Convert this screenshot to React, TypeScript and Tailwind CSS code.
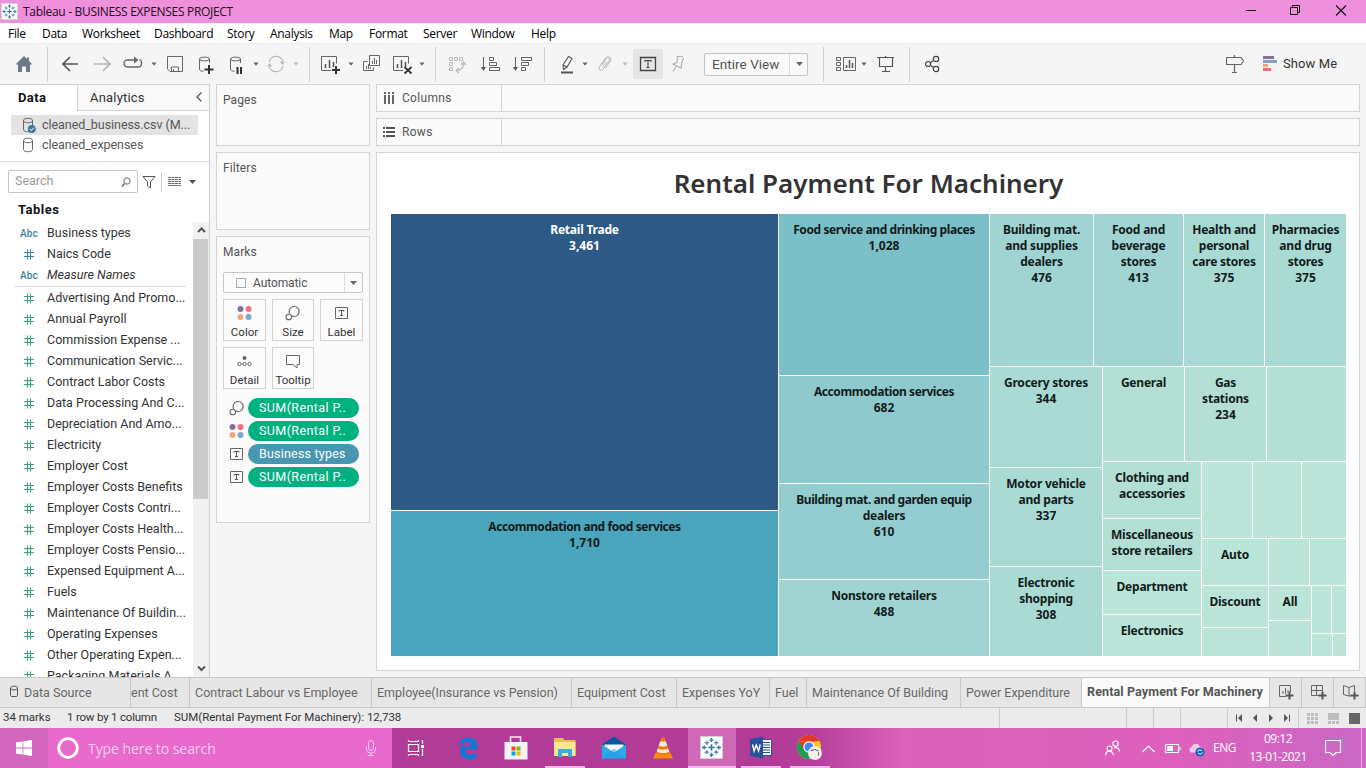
import React from "react";

type SvgProps = { w: number; h?: number; className?: string; children: React.ReactNode };

function Svg({ w, h = 24, className = "", children }: SvgProps) {
  return (
    <svg width={w} height={h} viewBox={`0 0 ${w} ${h}`} fill="none" className={`block shrink-0 ${className}`}>
      {children}
    </svg>
  );
}

function Caret({ className = "", fill = "#666" }: { className?: string; fill?: string }) {
  return (
    <Svg w={6} className={className}>
      <path d="M0.5 10.5h5l-2.5 3.2z" fill={fill} />
    </Svg>
  );
}

function Sep({ className = "" }: { className?: string }) {
  return <div className={`h-[35px] w-px shrink-0 bg-[#d0d0d0] ${className}`} />;
}

function TableauMark({ size, className = "" }: { size: number; className?: string }) {
  return (
    <svg width={size} height={size} viewBox="0 0 22 22" fill="none" className={`block shrink-0 ${className}`}>
      <rect x="0.5" y="0.5" width="21" height="21" fill="#fbfbfb" stroke="#cfcfd4" />
      <g stroke="#2f7ba6" strokeWidth="1.300">
        <path d="M11 8v6M8 11h6" strokeWidth="1.600" />
        <path d="M11 2v4M9 4h4M11 16v4M9 18h4M4 9v4M2 11h4M18 9v4M16 11h4" />
        <path d="M6.5 4.5v4M4.500 6.500h4M15.500 4.500v4M13.500 6.500h4M6.500 13.500v4M4.500 15.500h4M15.500 13.500v4M13.500 15.500h4" stroke="#5b93b3" />
      </g>
    </svg>
  );
}

function TitleBar() {
  return (
    <div className="flex h-[23px] shrink-0 items-center bg-[#ef90dc] font-['Open_Sans',sans-serif] text-[12px] text-[#1d0a19]">
      <TableauMark size={17} className="ml-[1px]" />
      <span className="ml-[5px] tracking-[-0.3px]">Tableau - BUSINESS EXPENSES PROJECT</span>
      <Svg w={120} h={23} className="ml-auto">
        <path d="M-1 10.500h11" stroke="#111" />
        <path d="M44.500 7.500h7v7h-7zM46.500 7.500v-2h7v7h-2" stroke="#111" />
        <path d="M90 5.500l10 10M100 5.500l-10 10" stroke="#111" strokeWidth="1.1" />
      </Svg>
    </div>
  );
}

const MENUS: [string, string][] = [
  ["File", "w-[34px]"],
  ["Data", "w-[40px]"],
  ["Worksheet", "w-[72px]"],
  ["Dashboard", "w-[73px]"],
  ["Story", "w-[43px]"],
  ["Analysis", "w-[59px]"],
  ["Map", "w-[40px]"],
  ["Format", "w-[54px]"],
  ["Server", "w-[48px]"],
  ["Window", "w-[60px]"],
  ["Help", "w-[40px]"],
];

function MenuBar() {
  return (
    <div className="flex h-[20px] shrink-0 items-center bg-white pt-[2px] pl-[8px] font-['Open_Sans',sans-serif] text-[12px] tracking-[-0.3px] text-black">
      {MENUS.map(([m, w]) => (
        <span key={m} className={w}>{m}</span>
      ))}
    </div>
  );
}

function Cylinder({ x = 0 }: { x?: number }) {
  return <path d={`M${x + 0.5} 7c0-2.500 10-2.500 10 0s-10 2.500-10 0v10c0 1.500 1.500 2.300 4 2.300M${x + 10.500} 7v4`} stroke="#666" />;
}

function ChartBox() {
  return (
    <>
      <path d="M10 18.500H0.500v-14h15v7" stroke="#666" />
      <path d="M4.500 12v4M8.500 8v8M12.500 10v5" stroke="#555" strokeWidth="1.500" />
    </>
  );
}

function Toolbar() {
  return (
    <div className="flex h-[41px] shrink-0 items-center border-t border-[#ececec] bg-[#f5f5f5]">
      <Svg w={18} className="ml-[15px]">
        <path d="M9 4L0.500 12.500h2.500V20h4v-5.500h4V20h4v-7.500h2.500L14 9V5.500h-2v1.500z" fill="#6b7886" />
      </Svg>
      <Sep className="ml-[14px]" />
      <Svg w={17} className="ml-[14px]">
        <path d="M16 12H1.500M8 5L1 12l7 7" stroke="#555" strokeWidth="1.600" />
      </Svg>
      <Svg w={17} className="ml-[15px]">
        <path d="M0 12h15M9 5l7 7-7 7" stroke="#b4b4b4" strokeWidth="1.600" />
      </Svg>
      <Svg w={20} className="ml-[12px]">
        <path d="M12 8H4.500a3.500 3.500 0 0 0 0 7H15c4.500 0 4.500-6 1.500-7.500" stroke="#666" strokeWidth="1.300" />
        <path d="M11 4.500l4.500 3.500-4.500 3.500z" fill="#666" />
      </Svg>
      <Caret className="ml-[8px]" />
      <Svg w={17} className="ml-[10px]">
        <path d="M0.500 4.500h15v15H3l-2.500-2.500zM4.500 19v-4h7v4M6.500 17v2" stroke="#666" />
      </Svg>
      <Svg w={16} className="ml-[14px]">
        <g transform="translate(1 0)"><Cylinder /></g>
        <path d="M11 13v9M6.500 17.500h9" stroke="#333" strokeWidth="2" />
      </Svg>
      <Svg w={15} className="ml-[15px]">
        <Cylinder x={1} />
        <path d="M8.500 15v7M12 15v7" stroke="#333" strokeWidth="2" />
      </Svg>
      <Caret className="ml-[9px]" />
      <Svg w={18} className="ml-[8px]">
        <path d="M2 10a7.200 7.200 0 0 1 13.800-1M16 14a7.200 7.200 0 0 1-13.800 1" stroke="#bbb" strokeWidth="1.200" />
        <path d="M12.500 9.500h5.500l-2.500 3.500zM5.500 14.500h-5.500l2.500-3.500z" fill="#bbb" />
      </Svg>
      <Caret className="ml-[8px]" fill="#bbb" />
      <Sep className="ml-[10px]" />
      <Svg w={20} className="ml-[11px]">
        <ChartBox />
        <path d="M15 14v8M11 18h8" stroke="#333" strokeWidth="2" />
      </Svg>
      <Caret className="ml-[7px]" />
      <Svg w={18} className="ml-[9px]">
        <path d="M6.500 3.500h10v10h-10zM4.500 9.500h-4v9h10v-3" stroke="#666" />
        <path d="M9.500 9v3M11.500 6v6M13.500 8v4M3.500 14v3M5.500 12v5M7.500 15v2" stroke="#666" />
      </Svg>
      <Svg w={20} className="ml-[12px]">
        <ChartBox />
        <path d="M11.500 15l7 6.500M18.500 15l-7 6.500" stroke="#333" strokeWidth="1.800" />
      </Svg>
      <Caret className="ml-[6px]" />
      <Sep className="ml-[10px]" />
      <Svg w={20} className="ml-[12px]">
        <path d="M1.500 5.500h3v3h-3zM6.500 5.500h3v3h-3zM11.500 5.500h3v3h-3zM1.500 10.500h3v3h-3zM1.500 15.500h3v3h-3z" stroke="#bbb" />
        <path d="M15.500 11.500c0 4-2 6.500-7 7M13 13l2.500-3 2.500 3M11 16l-3 2.500 3 2.500" stroke="#bbb" strokeWidth="1.300" />
      </Svg>
      <Svg w={20} className="ml-[13px]">
        <path d="M2.500 5v12M8.500 5.500h4v3h-4zM8.500 10.500h7v3h-7zM8.500 15.500h10v3h-10z" stroke="#666" />
        <path d="M0 15h5l-2.500 4z" fill="#555" />
      </Svg>
      <Svg w={20} className="ml-[12px]">
        <path d="M2.500 5v12M8.500 5.500h10v3h-10zM8.500 10.500h7v3h-7zM8.500 15.500h4v3h-4z" stroke="#666" />
        <path d="M0 15h5l-2.500 4z" fill="#555" />
      </Svg>
      <Sep className="ml-[11px]" />
      <Svg w={15} className="ml-[15px]">
        <path d="M3 13l5.500-8.500 3.500 2L7 15l-3.500 2.500zM3 13l4 2" stroke="#555" strokeWidth="1.100" />
        <path d="M1 20.500h12" stroke="#555" strokeWidth="2" />
      </Svg>
      <Caret className="ml-[7px]" />
      <Svg w={14} className="ml-[10px]">
        <path d="M3.500 13l4.800-6.500c1.500-2 4.500 0 3 2.200L5 17.500c-1.800 2.300-5.300-.2-3.700-2.600L7.500 6c2.200-3 7-.2 4.800 3.200L7.500 16M8.500 9.500l-4 5.500" stroke="#b4b4b4" />
      </Svg>
      <Caret className="ml-[10px]" fill="#bbb" />
      <div className="ml-[5px] flex h-[30px] w-[30px] shrink-0 items-center justify-center bg-[#e5e5e5]">
        <Svg w={18}>
          <path d="M1.500 5.500h15v13h-15z" stroke="#444" strokeWidth="1.300" />
          <path d="M6 10V8.500h6V10M9 8.500v7M7.500 15.500h3" stroke="#444" strokeWidth="1.100" />
        </Svg>
      </div>
      <Svg w={14} className="ml-[8px]">
        <path d="M5.500 4.500h6.500M6.500 5l-.5 5.500-4 1.500 8 4 .5-4 2-6.500M5.500 14l-3.500 5.500" stroke="#b4b4b4" strokeWidth="1.200" />
      </Svg>
      <div className="ml-[19px] flex h-[23px] w-[104px] shrink-0 items-center rounded-[2px] border border-[#c4c4c4] bg-[#f9f9f9]">
        <span className="w-[84px] pl-[7px] font-['Roboto',sans-serif] text-[13.500px] tracking-[0.050px] whitespace-nowrap text-[#555]">Entire View</span>
        <span className="flex h-full flex-1 items-center justify-center border-l border-[#dcdcdc]">
          <Svg w={8}><path d="M1 10h7l-3.500 4z" fill="#666" /></Svg>
        </span>
      </div>
      <Sep className="ml-[15px]" />
      <Svg w={21} className="ml-[12px]">
        <path d="M0.500 5.500h4v3h-4zM0.500 10.500h4v3h-4zM0.500 15.500h4v3h-4zM7.500 5.500h12v13h-12z" stroke="#666" />
        <path d="M10.500 13v3M13.500 8v8M16.500 11v5" stroke="#555" strokeWidth="1.500" />
      </Svg>
      <Caret className="ml-[4px]" />
      <Svg w={18} className="ml-[10px]">
        <path d="M0 5.500h17M2.500 6v8.500h13V6M8.500 4v1M8.500 15v5M5 19.500h8" stroke="#555" strokeWidth="1.200" />
      </Svg>
      <Sep className="ml-[14px]" />
      <Svg w={16} className="ml-[15px]">
        <g stroke="#444" strokeWidth="1.200">
          <circle cx="3" cy="12" r="2.500" /><circle cx="11" cy="7" r="2.700" /><circle cx="11" cy="17" r="2.700" />
          <path d="M5.300 10.700l3.400-2.200M5.300 13.300l3.400 2.200" />
        </g>
      </Svg>
      <Svg w={19} className="ml-auto">
        <path d="M0.500 5.500h14.500l2.500 3.500-2.500 3.500H0.500zM8.500 3v2M8.500 13v7.500M6 20.500h5" stroke="#666" strokeWidth="1.200" />
      </Svg>
      <Svg w={15} className="ml-[18px]">
        <path d="M0 4h11v3H0z" fill="#86709a" /><path d="M0 8h14v3H0z" fill="#7ea3cb" />
        <path d="M0 12h5v3H0z" fill="#f3a77c" /><path d="M0 16h8v3H0z" fill="#f2677c" />
      </Svg>
      <span className="mr-[28px] ml-[5px] w-[55px] whitespace-nowrap font-['Roboto',sans-serif] text-[13px] tracking-[0.1px] text-[#333]">Show Me</span>
    </div>
  );
}

function DbIcon({ checked = false }: { checked?: boolean }) {
  return (
    <Svg w={16} h={18}>
      <path d="M1.500 4.500c0-3 9-3 9 0s-9 3-9 0v9c0 3 9 3 9 0v-9" stroke="#666" />
      {checked && (
        <>
          <circle cx="9.800" cy="13" r="4" fill="#3a7e9f" />
          <path d="M8 13l1.400 1.500 2.500-2.800" stroke="#fff" />
        </>
      )}
    </Svg>
  );
}

const MEASURES = [
  "Advertising And Promo...",
  "Annual Payroll",
  "Commission Expense ...",
  "Communication Servic...",
  "Contract Labor Costs",
  "Data Processing And C...",
  "Depreciation And Amo...",
  "Electricity",
  "Employer Cost",
  "Employer Costs Benefits",
  "Employer Costs Contri...",
  "Employer Costs Health...",
  "Employer Costs Pensio...",
  "Expensed Equipment A...",
  "Fuels",
  "Maintenance Of Buildin...",
  "Operating Expenses",
  "Other Operating Expen...",
  "Packaging Materials A...",
];

function Hash({ color }: { color: string }) {
  return (
    <Svg w={11} h={11}>
      <path d="M3.500 0.500v10M6.500 0.500v10M0 3.500h10M0 7.500h10" stroke={color} strokeWidth="1.100" />
    </Svg>
  );
}

function Field({ kind, label, italic = false }: { kind: "abc" | "dim" | "measure"; label: string; italic?: boolean }) {
  return (
    <div className="flex h-[21px] shrink-0 items-center whitespace-nowrap">
      <span className="flex w-[47px] shrink-0 justify-center pl-[11px]">
        {kind === "abc" ? (
          <span className="text-[10px] font-medium tracking-[0.1px] text-[#3f7f9c]">Abc</span>
        ) : (
          <Hash color={kind === "dim" ? "#3f7f9c" : "#3ba27e"} />
        )}
      </span>
      <span className={italic ? "italic" : ""}>{label}</span>
    </div>
  );
}

function DataPane() {
  return (
    <div className="flex w-[210px] shrink-0 flex-col border-t border-r border-[#d0d0d0] bg-white text-[13px] text-[#333]">
      <div className="flex h-[26px] shrink-0">
        <div className="w-[77px] pt-[3px] pl-[18px] font-bold tracking-[0.4px] text-[#111]">Data</div>
        <div className="flex flex-1 border-b border-l border-[#d4d4d4] bg-[#f9f9f9] pt-[3px] pl-[12px] tracking-[0.2px]">
          Analytics
          <Svg w={8} h={18} className="mr-[6px] ml-auto"><path d="M6.500 4.500L2 9l4.500 4.500" stroke="#555" strokeWidth="1.200" /></Svg>
        </div>
      </div>
      <div className="h-[51px] shrink-0 border-b border-[#dcdcdc] pt-[4px] text-[12.500px] tracking-[-0.050px] text-[#555]">
        <div className="ml-[11px] flex h-[20px] w-[187px] items-center bg-[#e3e3e3] pl-[11px] whitespace-nowrap">
          <DbIcon checked /><span className="ml-[4px]">cleaned_business.csv (M...</span>
        </div>
        <div className="ml-[11px] flex h-[20px] items-center pl-[11px]">
          <DbIcon /><span className="ml-[4px]">cleaned_expenses</span>
        </div>
      </div>
      <div className="mt-[8px] ml-[8px] flex h-[23px] shrink-0 items-center">
        <div className="flex h-[23px] w-[130px] items-center rounded-[2px] border border-[#c4c4c4] pl-[6px] text-[12.500px] text-[#999]">
          <span>Search</span>
          <Svg w={12} h={14} className="mr-[5px] ml-auto"><circle cx="7" cy="6" r="3.200" stroke="#666" /><path d="M4.500 8.500L2 11.500" stroke="#666" strokeWidth="1.300" /></Svg>
        </div>
        <Svg w={14} h={14} className="ml-[4px]"><path d="M1 1.500h12l-4.500 5.500v6l-3-2V7z" stroke="#555" /></Svg>
        <div className="ml-[5px] h-[18px] w-px bg-[#ccc]" />
        <Svg w={13} h={12} className="ml-[6px]">
          <path d="M0 1.500h13M0 3.500h13M0 5.500h13M0 7.500h13M0 9.500h13" stroke="#666" strokeDasharray="3 0.500" />
        </Svg>
        <Svg w={8} h={12} className="ml-[7px]"><path d="M1 4h7L4.500 8z" fill="#555" /></Svg>
      </div>
      <div className="mt-[7px] shrink-0 pl-[18px] text-[13px] leading-[20px] font-bold tracking-[0.500px] text-[#111]">Tables</div>
      <div className="mt-[2px] flex min-h-0 flex-1">
        <div className="flex min-w-0 flex-1 flex-col overflow-hidden pt-px text-[12.500px]">
          <Field kind="abc" label="Business types" />
          <Field kind="dim" label="Naics Code" />
          <Field kind="abc" label="Measure Names" italic />
          <div className="mr-[7px] mb-px ml-[15px] h-px shrink-0 bg-[#d9d9d9]" />
          {MEASURES.map((m) => (
            <Field key={m} kind="measure" label={m} />
          ))}
        </div>
        <div className="flex w-[16px] shrink-0 flex-col items-center bg-[#f1f1f1]">
          <Svg w={15} h={17}><path d="M4 10l3.500-3.500L11 10" stroke="#555" strokeWidth="2" /></Svg>
          <div className="mr-px h-[260px] w-[15px] bg-[#cbcbcb]" />
          <Svg w={15} h={17} className="mt-auto"><path d="M4 6.500L7.500 10 11 6.500" stroke="#555" strokeWidth="2" /></Svg>
        </div>
      </div>
    </div>
  );
}

function ColorDots() {
  return (
    <Svg w={16} h={16}>
      <circle cx="3.500" cy="4" r="3" fill="#86709a" /><circle cx="11.500" cy="4" r="3" fill="#f5707f" />
      <circle cx="3.500" cy="12" r="3" fill="#f2a57d" /><circle cx="11.500" cy="12" r="3" fill="#80a4cc" />
    </Svg>
  );
}
function SizeIcon() {
  return (
    <Svg w={16} h={16}>
      <path d="M4.700 8.800A5 5 0 1 1 7 11" stroke="#666" strokeWidth="1.100" /><circle cx="3.800" cy="12" r="2.800" stroke="#666" strokeWidth="1.100" />
    </Svg>
  );
}
function LabelIcon() {
  return (
    <Svg w={16} h={16}>
      <path d="M1.500 2.500h12v11h-12z" stroke="#666" />
      <path d="M5 6.500v-1h5v1M7.500 5.500v5M6 10.500h3" stroke="#555" />
    </Svg>
  );
}
function DetailIcon() {
  return (
    <Svg w={16} h={16}>
      <circle cx="7.500" cy="5" r="2" fill="#666" />
      <circle cx="2.500" cy="11" r="1.700" stroke="#666" /><circle cx="7.500" cy="11" r="1.700" stroke="#666" /><circle cx="12.500" cy="11" r="1.700" stroke="#666" />
    </Svg>
  );
}
function TooltipIcon() {
  return (
    <Svg w={16} h={16}>
      <path d="M1.500 2.500h13v9H12V15l-4-3.500H1.500z" stroke="#666" />
    </Svg>
  );
}

function MarkButton({ icon, label }: { icon: React.ReactNode; label: string }) {
  return (
    <div className="flex h-[42px] w-full flex-col items-center border border-[#d2d2d2] bg-[#fbfbfb] pt-[5px] text-[11.500px] text-[#333]">
      {icon}
      <span className="mt-[3px] leading-[17px]">{label}</span>
    </div>
  );
}

function Pill({ icon, label, blue = false }: { icon: React.ReactNode; label: string; blue?: boolean }) {
  return (
    <div className="flex h-[20px] items-center">
      <span className="w-[19px]">{icon}</span>
      <span className={`flex h-[20px] w-[111px] items-center rounded-full pl-[11px] text-[12.500px] whitespace-nowrap text-white ${blue ? "bg-[#4996b2] tracking-[0.2px]" : "bg-[#00b180] tracking-[0.4px]"}`}>
        {label}
      </span>
    </div>
  );
}

function Cards() {
  return (
    <div className="ml-[6px] flex w-[154px] shrink-0 flex-col gap-[6px] text-[12px] tracking-[0.1px] text-[#555]">
      <div className="h-[62px] border border-[#d4d4d4] bg-[#fafafa] pt-[6px] pl-[6px]">Pages</div>
      <div className="h-[78px] border border-[#d4d4d4] bg-[#fafafa] pt-[6px] pl-[6px]">Filters</div>
      <div className="h-[287px] border border-[#d4d4d4] bg-[#fafafa] px-[6px] pt-[5px]">
        <div className="h-[30px] pt-px">Marks</div>
        <div className="flex h-[21px] w-[140px] items-center rounded-[2px] border border-[#c8c8c8] bg-[#fbfbfb]">
          <span className="ml-[12px] h-[10px] w-[10px] border border-[#aaa]" />
          <span className="ml-[7px] pt-px tracking-[-0.1px]">Automatic</span>
          <span className="ml-auto flex h-full w-[18px] items-center justify-center border-l border-[#ddd]">
            <Svg w={7} h={8}><path d="M0 2h7L3.500 6z" fill="#666" /></Svg>
          </span>
        </div>
        <div className="mt-[6px] grid w-[140px] grid-cols-[43px_42px_43px] gap-[6px] tracking-normal">
          <MarkButton icon={<ColorDots />} label="Color" />
          <MarkButton icon={<SizeIcon />} label="Size" />
          <MarkButton icon={<LabelIcon />} label="Label" />
          <MarkButton icon={<DetailIcon />} label="Detail" />
          <MarkButton icon={<TooltipIcon />} label="Tooltip" />
        </div>
        <div className="mt-[9px] flex flex-col gap-[3px] pl-[6px]">
          <Pill icon={<SizeIcon />} label="SUM(Rental P.." />
          <Pill icon={<ColorDots />} label="SUM(Rental P.." />
          <Pill icon={<LabelIcon />} label="Business types" blue />
          <Pill icon={<LabelIcon />} label="SUM(Rental P.." />
        </div>
      </div>
    </div>
  );
}

function Tile({ className, lines = [] }: { className: string; lines?: string[] }) {
  return (
    <div className={`overflow-hidden pt-[8px] text-center text-[12px] leading-[16px] font-bold whitespace-nowrap text-[#111c1b] ${className}`}>
      {lines.map((l) => (
        <div key={l} className={/^\d/.test(l) ? "tracking-normal" : l.length > 20 ? "tracking-[-0.42px]" : "tracking-[-0.22px]"}>{l}</div>
      ))}
    </div>
  );
}

function Treemap() {
  return (
    <div className="flex h-[442px] w-[955px] gap-px bg-white font-['Noto_Sans',sans-serif]">
      <div className="flex w-[387px] flex-col gap-px">
        <Tile className="h-[296px] bg-[#2c5985] text-[#fff]!" lines={["Retail Trade", "3,461"]} />
        <Tile className="flex-1 bg-[#4ba5bc]" lines={["Accommodation and food services", "1,710"]} />
      </div>
      <div className="flex w-[210px] flex-col gap-px">
        <Tile className="h-[161px] bg-[#7bbfc9]" lines={["Food service and drinking places", "1,028"]} />
        <Tile className="h-[107px] bg-[#8ec9cd]" lines={["Accommodation services", "682"]} />
        <Tile className="h-[95px] bg-[#94cdcf]" lines={["Building mat. and garden equip", "dealers", "610"]} />
        <Tile className="flex-1 bg-[#a0d4d3]" lines={["Nonstore retailers", "488"]} />
      </div>
      <div className="flex flex-1 flex-col gap-px">
        <div className="flex h-[152px] gap-px">
          <Tile className="w-[103px] bg-[#a0d4d3]" lines={["Building mat.", "and supplies", "dealers", "476"]} />
          <Tile className="w-[89px] bg-[#a1d4d3]" lines={["Food and", "beverage", "stores", "413"]} />
          <Tile className="w-[80px] bg-[#a9dad4]" lines={["Health and", "personal", "care stores", "375"]} />
          <Tile className="flex-1 bg-[#a9dad4]" lines={["Pharmacies", "and drug", "stores", "375"]} />
        </div>
        <div className="flex flex-1 gap-px">
          <div className="flex w-[112px] flex-col gap-px">
            <Tile className="h-[100px] bg-[#a9dad4]" lines={["Grocery stores", "344"]} />
            <Tile className="h-[98px] bg-[#a9dad4]" lines={["Motor vehicle", "and parts", "337"]} />
            <Tile className="flex-1 bg-[#a9dad4]" lines={["Electronic", "shopping", "308"]} />
          </div>
          <div className="flex flex-1 flex-col gap-px">
            <div className="flex h-[94px] gap-px">
              <Tile className="w-[81px] bg-[#b3dfd5]" lines={["General"]} />
              <Tile className="w-[81px] bg-[#b3dfd5]" lines={["Gas", "stations", "234"]} />
              <Tile className="flex-1 bg-[#b3dfd5]" />
            </div>
            <div className="flex flex-1 gap-px">
              <div className="flex w-[98px] flex-col gap-px">
                <Tile className="h-[56px] bg-[#b3dfd5]" lines={["Clothing and", "accessories"]} />
                <Tile className="h-[51px] bg-[#b3dfd5]" lines={["Miscellaneous", "store retailers"]} />
                <Tile className="h-[43px] bg-[#bce5d9]" lines={["Department"]} />
                <Tile className="flex-1 bg-[#bce5d9]" lines={["Electronics"]} />
              </div>
              <div className="flex flex-1 flex-col gap-px">
                <div className="flex h-[76px] gap-px">
                  <Tile className="w-[50px] bg-[#bce5d9]" />
                  <Tile className="w-[48px] bg-[#bce5d9]" />
                  <Tile className="flex-1 bg-[#bce5d9]" />
                </div>
                <div className="flex flex-1 gap-px">
                  <div className="flex w-[66px] flex-col gap-px">
                    <Tile className="h-[46px] bg-[#bce5d9]" lines={["Auto"]} />
                    <Tile className="h-[41px] bg-[#bce5d9]" lines={["Discount"]} />
                    <Tile className="flex-1 bg-[#bce5d9]" />
                  </div>
                  <div className="flex flex-1 flex-col gap-px">
                    <div className="flex h-[46px] gap-px">
                      <Tile className="w-[40px] bg-[#bce5d9]" />
                      <Tile className="flex-1 bg-[#bce5d9]" />
                    </div>
                    <div className="flex flex-1 gap-px">
                      <div className="flex w-[42px] flex-col gap-px">
                        <Tile className="h-[34px] bg-[#bce5d9]" lines={["All"]} />
                        <Tile className="flex-1 bg-[#bce5d9]" />
                      </div>
                      <div className="flex flex-1 flex-col gap-px">
                        <div className="flex h-[47px] gap-px">
                          <Tile className="w-[19px] bg-[#bce5d9]" />
                          <Tile className="flex-1 bg-[#bce5d9]" />
                        </div>
                        <div className="flex flex-1 gap-px">
                          <Tile className="w-[20px] bg-[#bce5d9]" />
                          <Tile className="flex-1 bg-[#bce5d9]" />
                        </div>
                      </div>
                    </div>
                  </div>
                </div>
              </div>
            </div>
          </div>
        </div>
      </div>
    </div>
  );
}

function Shelf({ icon, label }: { icon: React.ReactNode; label: string }) {
  return (
    <div className="flex h-[28px] shrink-0 border border-[#d4d4d4] bg-[#fafafa] text-[12px] tracking-[0.3px] text-[#555]">
      <div className="flex w-[125px] items-center border-r border-[#d4d4d4] pl-[6px]">
        {icon}
        <span className="ml-[6px]">{label}</span>
      </div>
    </div>
  );
}

function View() {
  return (
    <div className="mr-[6px] ml-[6px] flex min-w-0 flex-1 flex-col gap-[6px]">
      <Shelf
        label="Columns"
        icon={<Svg w={13} h={12}><path d="M2 0v2M6 0v2M10 0v2M2 3v9M6 3v9M10 3v9" stroke="#666" strokeWidth="2" /></Svg>}
      />
      <Shelf
        label="Rows"
        icon={<Svg w={13} h={12}><path d="M0 2h2M0 6h2M0 10h2M3 2h9M3 6h9M3 10h9" stroke="#555" strokeWidth="2" /></Svg>}
      />
      <div className="flex h-[519px] shrink-0 flex-col border border-[#d4d4d4] bg-white pl-[14px]">
        <div className="flex h-[61px] w-[955px] items-center justify-center font-['Noto_Sans',sans-serif] text-[26px] font-semibold text-[#333]">
          <span>Rental Payment For Machinery</span>
        </div>
        <Treemap />
      </div>
    </div>
  );
}

const SHEETS: [string, string][] = [
  ["Contract Labour vs Employee", "w-[182px]"],
  ["Employee(Insurance vs Pension)", "w-[200px]"],
  ["Equipment Cost", "w-[105px]"],
  ["Expenses YoY", "w-[93px]"],
  ["Fuel", "w-[37px]"],
  ["Maintenance Of Building", "w-[154px]"],
  ["Power Expenditure", "w-[121px]"],
];

function SheetTabs() {
  const cell = "flex h-full shrink-0 items-center border-r border-[#c8c8c8]";
  return (
    <div className="flex h-[31px] shrink-0 items-center border-t border-b border-[#c8c8c8] bg-[#e6e6e6] text-[12.500px] whitespace-nowrap text-[#666]">
      <div className={`${cell} w-[131px] pl-[9px]`}>
        <Svg w={10} h={14} className="mb-[3px]"><path d="M1.500 4c0-2.500 7-2.500 7 0s-7 2.500-7 0v7c0 1 .5 1.500 1.500 1.500h4c1 0 1.500-.5 1.500-1.500V4" stroke="#555" /></Svg>
        <span className="ml-[5px] pt-px">Data Source</span>
      </div>
      <div className={`${cell} w-[59px] pt-px`}>ent Cost</div>
      {SHEETS.map(([s, w]) => (
        <div key={s} className={`${cell} pt-px pl-[5px] ${w}`}>{s}</div>
      ))}
      <div className={`${cell} w-[188px] bg-[#fafafa] pb-[1px] pl-[5px] font-bold tracking-[0.120px] text-[#555]`}>
        Rental Payment For Machinery
      </div>
      <div className={`${cell} w-[32px] pl-[8px]`}>
        <Svg w={17} h={17}><path d="M8 12.500H1.500v-11h11V8M5 7v3M7.500 4v6M10 6v3" stroke="#666" /><path d="M11.500 7.500v8M7.500 11.500h8" stroke="#555" strokeWidth="2" /></Svg>
      </div>
      <div className={`${cell} w-[32px] pl-[8px]`}>
        <Svg w={17} h={17}><path d="M9 11.500H1.500v-10h11V7M6.500 1.500v10M1.500 6.500h11" stroke="#666" /><path d="M12.500 7.500v8M8.500 11.500h8" stroke="#555" strokeWidth="2" /></Svg>
      </div>
      <div className={`${cell} w-[32px] pl-[8px]`}>
        <Svg w={17} h={17}><path d="M1.500 1.500l5.500 2v8.500l-5.500-1.500zM7 3.500l5.500-2V7M7 12h2" stroke="#666" /><path d="M12.500 7.500v8M8.500 11.500h8" stroke="#555" strokeWidth="2" /></Svg>
      </div>
    </div>
  );
}

function StatusBar() {
  const cell = "h-full shrink-0 border-l border-[#ccc]";
  return (
    <div className="flex h-[20px] shrink-0 items-center bg-[#ebebeb] text-[11.500px] tracking-[-0.030px] whitespace-nowrap text-[#333]">
      <span className="w-[64px] pl-[3px]">34 marks</span>
      <span className="w-[107px] pl-[3px] tracking-[-0.2px]">1 row by 1 column</span>
      <span className="pl-[3px]">SUM(Rental Payment For Machinery): 12,738</span>
      <div className={`${cell} ml-auto w-[127px]`} />
      <div className={`${cell} w-[27px]`} />
      <div className={`${cell} w-[27px]`} />
      <div className={`${cell} w-[47px]`} />
      <div className={`${cell} flex w-[71px] items-center`}>
        <Svg w={66} h={12} className="mb-px ml-[7px]">
          <path d="M1.500 2.500v7M54.500 2.500v7" stroke="#555" />
          <path d="M7 2v8L3 6zM22 2v8L18 6zM34 2v8L38 6zM49 2v8L53 6z" fill="#555" />
        </Svg>
      </div>
      <div className={`${cell} flex w-[68px] items-center`}>
        <Svg w={60} h={13} className="ml-[8px]">
          <path d="M0 2.500h11M0 6.500h11M0 10.500h11" stroke="#bdbdbd" strokeWidth="3" strokeDasharray="3 1" />
          <path d="M21 1h11v7H21z" fill="#bdbdbd" /><path d="M21 10.500h11" stroke="#bdbdbd" strokeWidth="3" strokeDasharray="3 1" />
          <path d="M42 1h11v11H42z" fill="#666" />
        </Svg>
      </div>
    </div>
  );
}

function TaskCell({ className = "", children }: { className?: string; children: React.ReactNode }) {
  return <div className={`flex h-full shrink-0 items-center justify-center ${className}`}>{children}</div>;
}

function Taskbar() {
  return (
    <div className="flex h-[40px] shrink-0 bg-[linear-gradient(90deg,#b13b97_0,#b13b97_57%,#b8409e_60%,#da62bb_66%,#dd60bc_86%,#cb68c5_100%)] font-['Open_Sans',sans-serif] text-white">
      <TaskCell className="w-[48px] bg-[#d566bd]">
        <Svg w={16} h={16}>
          <path d="M0 2.300l6.500-.9v6.200H0zM7.300 1.300L16 0v7.600H7.300zM0 8.400h6.500v6.200L0 13.700zM7.300 8.400H16V16l-8.700-1.300z" fill="#fff" />
        </Svg>
      </TaskCell>
      <div className="flex w-[344px] shrink-0 items-center bg-[#e86acd]">
        <Svg w={22} h={22} className="ml-[9px]"><circle cx="11" cy="11" r="9.300" stroke="#fff" strokeWidth="2.800" /></Svg>
        <span className="ml-[9px] pt-px text-[14px] tracking-[-0.060px] text-[#f9cdef]">Type here to search</span>
        <Svg w={12} h={18} className="mr-[15px] ml-auto"><rect x="3.500" y="1.500" width="5" height="10" rx="2.500" stroke="#f9cdef" /><path d="M1.500 8v3c0 4 9 4 9 0V8M6 14v3M3 16.500h6" stroke="#f9cdef" /></Svg>
      </div>
      <TaskCell className="w-[48px]">
        <Svg w={18} h={16}><path d="M1.500 4.500h10v7h-10zM1.500 0v1.500h10V0M1.500 16v-1.500h10V16M15.500 0v4M15.500 9v7" stroke="#fff" strokeWidth="1.200" /><path d="M14 5h3v3h-3z" fill="#fff" /></Svg>
      </TaskCell>
      <TaskCell className="w-[55px]">
        <Svg w={22} h={22}><path d="M1 10C2 3.500 6.500 0.500 11.500 0.500c6 0 9 4.500 9 9v3H7.500c.3 3.500 3 5 6 5 2.500 0 4.500-.6 6-1.500v4.500c-2 1-4.300 1.500-7 1.500-6 0-9.500-3.500-9.500-8 0-3.500 2-6 5-7.500-1 1-1.300 2-1.500 3H14c0-2.500-1.500-4.500-4.500-4.500C5.500 5 2.500 7.500 1 10z" fill="#0d78d6" /></Svg>
      </TaskCell>
      <TaskCell className="w-[41px]">
        <Svg w={24} h={26}><path d="M6.500 7V2h10v5" stroke="#f3f0f2" strokeWidth="1.500" /><path d="M0.500 7h23v17.500h-23z" fill="#f4f2f4" /><path d="M7.500 11.500h4v4h-4z" fill="#ef4a23" /><path d="M12.500 11.500h4v4h-4z" fill="#7fb900" /><path d="M7.500 16.500h4v4h-4z" fill="#00a3ee" /><path d="M12.500 16.500h4v4h-4z" fill="#feb800" /></Svg>
      </TaskCell>
      <TaskCell className="ml-[9px] w-[40px] border-b-2 border-[#f7b8e8]">
        <Svg w={22} h={22} className="mt-[2px]"><path d="M0 1h9l1.500 2H21.500v16H0z" fill="#e9bd4f" /><path d="M0 5h21.500v14H0z" fill="#fde592" /><path d="M4 12h14v8h-4v-4H8v4H4z" fill="#3aaee0" /></Svg>
      </TaskCell>
      <TaskCell className="ml-[16px] w-[26px]">
        <Svg w={24} h={24}><path d="M0 8.500L12 0.500l12 8V12H0z" fill="#0b57a0" /><path d="M2.500 8.500h19V17h-19z" fill="#f7f7f7" /><path d="M0 8.500l12 8 12-8V22.500H0z" fill="#2aabee" /><path d="M0 22.500l12-10 12 10z" fill="#2497dd" opacity=".5" /></Svg>
      </TaskCell>
      <TaskCell className="ml-[24px] w-[24px]">
        <Svg w={22} h={24}><path d="M4 16h14l3 6.500H1z" fill="#f58b0d" /><path d="M9.500 1.500h3L18 17c-2 2.500-12 2.500-14 0z" fill="#f47d0a" /><path d="M8.200 5.500h5.600l1.400 4c-2 1.300-6.400 1.300-8.400 0zM5.800 12.500c3 1.600 7.400 1.600 10.400 0l1 3c-3 2-9.400 2-12.400 0z" fill="#ececec" /></Svg>
      </TaskCell>
      <TaskCell className="ml-[13px] w-[48px] border-b-2 border-[#f7b8e8] bg-[#d068b8]">
        <TableauMark size={23} className="mt-[1px] mr-px" />
      </TaskCell>
      <TaskCell className="ml-[5px] w-[40px] border-b-2 border-[#f7b8e8]">
        <Svg w={24} h={24} className="mt-[2px]"><path d="M12 3.500h10.500v16H12z" fill="#f4f6fa" stroke="#2b579a" /><path d="M14 6.500h7M14 9h7M14 11.500h7M14 14h7M14 16.500h7" stroke="#2b579a" /><path d="M1 3l13-2.500v22L1 20z" fill="#27529a" /><path d="M3.500 8.500l1.600 6.500L7.300 9l2.200 6 1.700-6.500" stroke="#fff" strokeWidth="1.400" /></Svg>
      </TaskCell>
      <TaskCell className="ml-[9px] w-[40px] border-b-2 border-[#f7b8e8]">
        <Svg w={28} h={26} className="mt-[2px]">
          <circle cx="13" cy="12" r="12" fill="#f7c61a" /><path d="M2.600 6A12 12 0 0 1 23.400 6L13 7z" fill="#e2392b" /><path d="M2.600 6A12 12 0 0 0 13 24l5-9-9-1z" fill="#1d9d52" />
          <path d="M2.600 6l5.400 8 3-7z" fill="#e2392b" />
          <circle cx="13" cy="12" r="5.700" fill="#fff" /><circle cx="13" cy="12" r="4.500" fill="#4285f4" />
          <circle cx="19" cy="18" r="7" fill="#f5eff0" /><path d="M15 15.500l4-1 3.500 1.500" stroke="#6b5560" /><path d="M22.500 17v4" stroke="#d55" />
        </Svg>
      </TaskCell>
      <Svg w={16} h={16} className="mt-[12px] ml-auto"><circle cx="10.500" cy="3.700" r="2.700" stroke="#fff" strokeWidth="1.200" /><circle cx="4.500" cy="8.500" r="2.500" stroke="#fff" strokeWidth="1.200" /><path d="M0.700 15c0-5 7.600-5 7.600 0M9 8c3-1 5.500.5 5.500 3.500" stroke="#fff" strokeWidth="1.200" /></Svg>
      <Svg w={13} h={8} className="mt-[17px] ml-[21px]"><path d="M0.500 7l6-6 6 6" stroke="#fff" strokeWidth="1.200" /></Svg>
      <Svg w={16} h={10} className="mt-[16px] ml-[10px]"><path d="M0.500 0.500h13v8H0.500zM15 3v3" stroke="#fff" strokeWidth="1.100" /><path d="M2 2h6v5H2z" fill="#fff" /></Svg>
      <Svg w={18} h={14} className="mt-[15px] ml-[7px]"><path d="M3 9.500a3 3 0 0 1 .5-5.500C5-.5 11-.5 12 4c3 0 4 3 3 5.500z" fill="#f3c6e6" /><circle cx="12" cy="9" r="4.600" fill="#1667b5" /><path d="M9.500 8.500c.5-2 3.500-2 4.500-.5M14.500 9.500c-.5 2-3.500 2-4.500.5" stroke="#fff" /></Svg>
      <span className="ml-[7px] w-[24px] text-[12px] leading-[40px] tracking-[-0.500px]">ENG</span>
      <div className="ml-[10px] flex w-[62px] flex-col items-center pt-[2px] text-[12px] leading-[18px] tracking-[-0.5px] whitespace-nowrap">
        <span>09:12</span><span>13-01-2021</span>
      </div>
      <Svg w={17} h={17} className="mt-[12px] ml-[16px]"><path d="M0.500 0.500h15v12H11L8 15.500 5 12.500H0.500z" stroke="#fff" strokeWidth="1.200" /></Svg>
      <div className="ml-[19px] w-[5px] border-l border-[#e9a4dc]" />
    </div>
  );
}

export default function App() {
  return (
    <div className="flex h-[768px] w-[1366px] flex-col overflow-hidden bg-[#f5f5f5] font-['Roboto',sans-serif]">
      <TitleBar />
      <MenuBar />
      <Toolbar />
      <div className="flex min-h-0 flex-1">
        <DataPane />
        <Cards />
        <View />
      </div>
      <SheetTabs />
      <StatusBar />
      <Taskbar />
    </div>
  );
}
